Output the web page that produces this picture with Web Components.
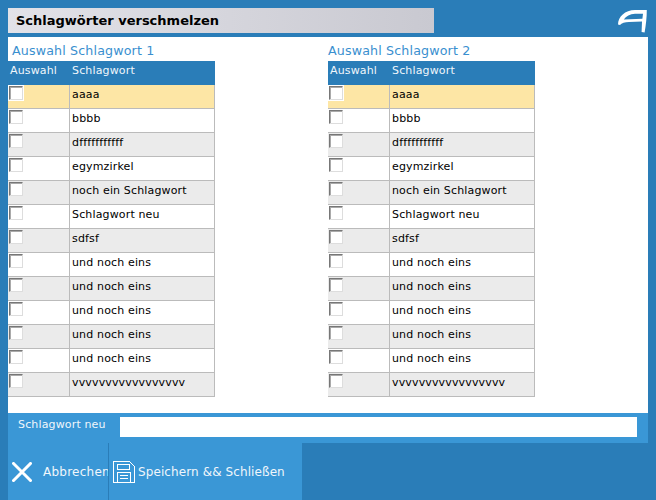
<!DOCTYPE html>
<html lang="de">
<head>
<meta charset="utf-8">
<title>Schlagwörter verschmelzen</title>
<style>
    html, body { margin: 0; height: 100%; background: #2a7db8; overflow: hidden; }
    body { font: 11px "DejaVu Sans", Verdana, sans-serif; color: #000; }
</style>
</head>
<body>
<merge-dialog></merge-dialog>
<script>
const TAGS = ['aaaa', 'bbbb', 'dfffffffffff', 'egymzirkel', 'noch ein Schlagwort', 'Schlagwort neu', 'sdfsf',
    'und noch eins', 'und noch eins', 'und noch eins', 'und noch eins', 'und noch eins'];

class TitleBar extends HTMLElement {
    connectedCallback() {
        this.attachShadow({ mode: 'open' });
        this.shadowRoot.innerHTML = `
            <style>
                :host { display: flex; justify-content: space-between; height: 37px; box-sizing: border-box; padding-top: 8px; }
                .title {
                    width: 426px; height: 25px; box-sizing: border-box; padding: 0 8px;
                    background: linear-gradient(90deg, #e2e2e8, #c9c9d1);
                    font-weight: 700; font-size: 13px; line-height: 25px; color: #000;
                }
                svg { margin: 1px 0 0 0; }
            </style>
            <div class="title"><slot></slot></div>
            <svg width="30" height="25" viewBox="0 0 30 25">
                <path fill="#fff" fill-rule="evenodd" d="M28.8 1 L17 1 C7 1 0 8 0 15.5 L2 16 C3.5 14 7 13.3 11 13.1 L24 12.6 L23.6 23 L26.6 23.4 C28 16 28.8 8 28.8 1 Z M25 4.8 L17 4.8 C12 5 8 7 5.8 10.6 L24.4 9.8 Z"/>
            </svg>
        `;
    }
}
customElements.define('title-bar', TitleBar);

class TagTable extends HTMLElement {
    connectedCallback() {
        this.attachShadow({ mode: 'open' });
        const tags = [...TAGS, this.getAttribute('last')];
        const rows = tags.map((tag, i) => `
            <div class="row ${i === 0 ? 'selected' : i % 2 ? 'odd' : 'even'}">
                <div class="check"><input type="checkbox"></div>
                <div class="tag">${tag}</div>
            </div>`).join('');
        this.shadowRoot.innerHTML = `
            <style>
                :host { display: block; width: 207px; letter-spacing: .15px; }
                .caption { height: 24px; box-sizing: border-box; padding: 6px 0 0 var(--caption-indent, 0); font-size: 12.65px; line-height: 15px; color: #3a8fcf; width: 260px; white-space: nowrap; }
                .head { display: grid; grid-template-columns: 62px 1fr; height: 24px; background: #2a7db8; color: #f0f6fb; line-height: 20px; }
                .head div { padding-left: 2px; }
                .row { display: grid; grid-template-columns: 62px 1fr; height: 24px; box-sizing: border-box; border-bottom: 1px solid #bbb; border-right: 1px solid #bbb; }
                .selected { background: #fde6a5; }
                .odd { background: #fff; }
                .even { background: #ebebeb; }
                .check { border-right: 1px solid #bbb; padding: 1px 0 0 1px; }
                input {
                    appearance: none; display: block; margin: 0; width: 14px; height: 14px; box-sizing: border-box;
                    background: #fff; border: 1px solid; border-color: #777 #ddd #ddd #777; box-shadow: inset 1px 1px 0 #aaa;
                }
                .selected input { outline: 1px solid #fff; }
                .tag { padding-left: 2px; line-height: 19px; white-space: nowrap; }
            </style>
            <div class="caption">${this.getAttribute('caption')}</div>
            <div class="head"><div>Auswahl</div><div>Schlagwort</div></div>
            ${rows}
        `;
    }
}
customElements.define('tag-table', TagTable);

class FooterButton extends HTMLElement {
    connectedCallback() {
        this.attachShadow({ mode: 'open' });
        this.shadowRoot.innerHTML = `
            <style>
                :host { display: flex; align-items: center; height: 57px; box-sizing: border-box; overflow: hidden; background: #3a97d6; color: #f0f6fb; font-size: 12px; letter-spacing: .1px; white-space: nowrap; }
                ::slotted(svg) { flex: none; }
            </style>
            <slot name="icon"></slot><slot></slot>
        `;
    }
}
customElements.define('footer-button', FooterButton);

class MergeDialog extends HTMLElement {
    connectedCallback() {
        this.attachShadow({ mode: 'open' });
        this.shadowRoot.innerHTML = `
            <style>
                :host { display: block; height: 500px; padding: 0 8px; box-sizing: border-box; }
                .panel { display: flex; gap: 113px; height: 376px; box-sizing: border-box; background: #fff; }
                .first { --caption-indent: 4px; }
                .new-tag { display: flex; height: 30px; box-sizing: border-box; padding: 4px 11px 6px 10px; background: #3a97d6; color: #f0f6fb; letter-spacing: .15px; }
                .new-tag label { width: 102px; line-height: 16px; }
                .new-tag input { flex: 1; min-width: 0; height: 20px; margin: 0; padding: 0; border: 0; background: #fff; }
                .actions { display: flex; width: 294px; }
                .cancel { width: 101px; border-right: 1px solid #2a7db8; letter-spacing: .25px; }
                .cancel svg { margin: 0 11px 0 4px; }
                .save { flex: 1; }
                .save svg { margin: 0 3px 0 4px; }
            </style>
            <title-bar>Schlagwörter verschmelzen</title-bar>
            <div class="panel">
                <tag-table class="first" caption="Auswahl Schlagwort 1" last="vvvvvvvvvvvvvvvvv"></tag-table>
                <tag-table caption="Auswahl Schlagwort 2" last="vvvvvvvvvvvvvvvvv"></tag-table>
            </div>
            <div class="new-tag"><label>Schlagwort neu</label><input type="text"></div>
            <div class="actions">
                <footer-button class="cancel">
                    <svg slot="icon" width="20" height="20" viewBox="0 0 20 20"><path d="M1.5 1.5 L18.5 18.5 M18.5 1.5 L1.5 18.5" stroke="#fff" stroke-width="3" stroke-linecap="square" fill="none"/></svg>
                    Abbrechen
                </footer-button>
                <footer-button class="save">
                    <svg slot="icon" width="22" height="22" viewBox="0 0 22 22" fill="none" stroke="#fff" shape-rendering="crispEdges">
                        <path d="M.5.5H16.5L21.5 5.5V21.5H.5Z"/>
                        <path d="M4.5 3.5H16.5V8.5H4.5ZM4.5 11.5H17.5V21.5H4.5ZM7 14.5H15M7 17.5H15"/>
                    </svg>
                    Speichern &amp;&amp; Schließen
                </footer-button>
            </div>
        `;
    }
}
customElements.define('merge-dialog', MergeDialog);
</script>
</body>
</html>
